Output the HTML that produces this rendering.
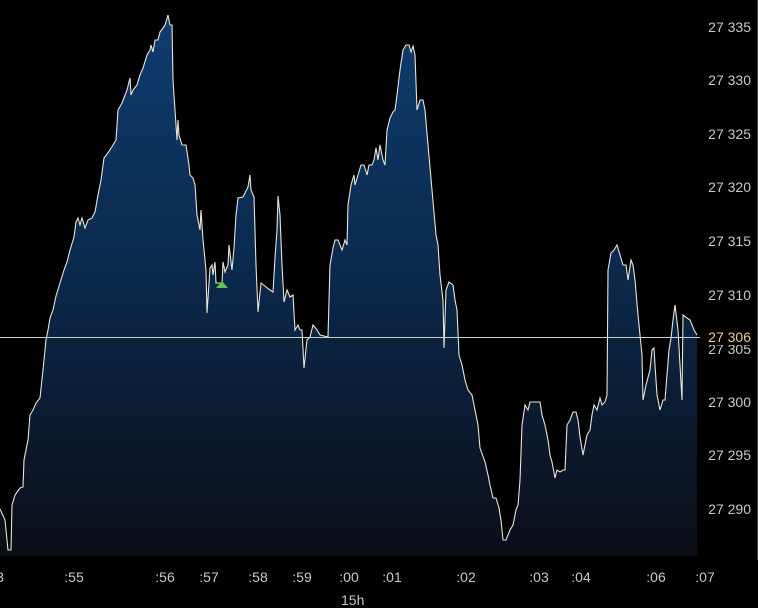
<!DOCTYPE html>
<html><head><meta charset="utf-8"><style>
html,body{margin:0;padding:0;background:#000;width:758px;height:599px;overflow:hidden;font-family:"Liberation Sans","DejaVu Sans",sans-serif}
.lbl{position:absolute;font-size:14px;color:#c8c8c8;white-space:nowrap}
.p{right:7px;transform:translateY(-50%)}
.t{top:569px;transform:translateX(-50%)}
</style></head><body>
<svg width="758" height="599" style="position:absolute;left:0;top:0">
<defs>
<linearGradient id="gr" x1="0" y1="15" x2="0" y2="556" gradientUnits="userSpaceOnUse">
<stop offset="0" stop-color="#0e3c70"/><stop offset="0.45" stop-color="#0b2a4e"/><stop offset="1" stop-color="#0b0e17"/></linearGradient></defs>
<polygon fill="url(#gr)" points="0,556 0,509 5,520 8,550 11,550 12,505 15,495 20,488 23,487 24,460 28,440 30,415 33,410 36,403 40,398 43,370 46,340 48,330 50,318 53,310 56,296 60,283 64,270 67,262 70,250 74,237 76,222 78,218 80,225 82,218 85,228 88,220 92,218 95,212 98,195 101,180 104,158 110,150 116,140 118,110 122,103 127,90 130,78 131,95 133,90 137,85 140,75 143,68 147,55 150,50 151,45 153,52 155,40 158,40 160,32 163,28 165,25 168,15 170,25 172,25 173,80 175,110 177,140 178,120 179,135 182,145 186,145 189,165 190,175 193,178 195,185 197,215 200,230 201,210 203,240 206,270 207,313 210,268 212,265 213,275 215,262 216,283 222,283 223,262 225,272 228,265 229,245 232,270 234,248 236,215 238,198 243,197 248,187 250,175 251,190 254,197 256,265 258,312 261,283 270,290 273,292 275,258 277,230 278,196 280,215 282,265 284,302 287,290 290,297 293,295 295,330 298,325 300,330 302,330 304,368 307,340 310,337 313,325 317,330 320,335 328,337 330,265 333,248 335,240 338,240 342,250 345,240 347,245 348,205 351,185 354,175 355,185 358,175 361,165 364,165 367,175 369,165 372,165 374,160 376,148 378,160 380,145 383,160 385,165 387,130 390,118 393,112 395,110 397,95 400,70 403,50 406,45 409,45 411,52 413,46 415,55 417,110 420,100 423,100 425,110 428,145 432,190 436,235 438,245 440,275 443,300 444,348 446,290 449,282 453,285 455,300 457,310 459,355 462,365 465,380 468,390 472,395 475,410 478,425 480,448 485,462 488,475 490,485 493,498 496,498 499,508 501,520 503,540 506,540 510,530 513,525 516,510 518,505 520,480 522,425 525,405 528,410 530,402 535,402 540,402 542,415 545,425 548,440 550,455 552,462 555,478 557,470 560,472 563,470 565,470 567,425 570,420 573,412 576,412 578,420 580,437 583,455 585,445 587,435 590,430 592,415 594,405 597,410 600,398 602,405 605,402 607,395 608,270 611,253 614,250 617,245 620,255 623,265 626,265 628,280 631,260 633,265 635,280 638,315 640,335 642,355 643,400 646,385 650,370 652,350 654,348 655,365 657,395 660,410 663,400 665,400 667,375 669,350 671,338 673,320 675,305 678,330 680,365 682,400 683,315 687,318 690,320 692,325 694,330 697,335 697,556"/>
<polyline fill="none" stroke="#e8e4d8" stroke-width="1.1" points="0,509 5,520 8,550 11,550 12,505 15,495 20,488 23,487 24,460 28,440 30,415 33,410 36,403 40,398 43,370 46,340 48,330 50,318 53,310 56,296 60,283 64,270 67,262 70,250 74,237 76,222 78,218 80,225 82,218 85,228 88,220 92,218 95,212 98,195 101,180 104,158 110,150 116,140 118,110 122,103 127,90 130,78 131,95 133,90 137,85 140,75 143,68 147,55 150,50 151,45 153,52 155,40 158,40 160,32 163,28 165,25 168,15 170,25 172,25 173,80 175,110 177,140 178,120 179,135 182,145 186,145 189,165 190,175 193,178 195,185 197,215 200,230 201,210 203,240 206,270 207,313 210,268 212,265 213,275 215,262 216,283 222,283 223,262 225,272 228,265 229,245 232,270 234,248 236,215 238,198 243,197 248,187 250,175 251,190 254,197 256,265 258,312 261,283 270,290 273,292 275,258 277,230 278,196 280,215 282,265 284,302 287,290 290,297 293,295 295,330 298,325 300,330 302,330 304,368 307,340 310,337 313,325 317,330 320,335 328,337 330,265 333,248 335,240 338,240 342,250 345,240 347,245 348,205 351,185 354,175 355,185 358,175 361,165 364,165 367,175 369,165 372,165 374,160 376,148 378,160 380,145 383,160 385,165 387,130 390,118 393,112 395,110 397,95 400,70 403,50 406,45 409,45 411,52 413,46 415,55 417,110 420,100 423,100 425,110 428,145 432,190 436,235 438,245 440,275 443,300 444,348 446,290 449,282 453,285 455,300 457,310 459,355 462,365 465,380 468,390 472,395 475,410 478,425 480,448 485,462 488,475 490,485 493,498 496,498 499,508 501,520 503,540 506,540 510,530 513,525 516,510 518,505 520,480 522,425 525,405 528,410 530,402 535,402 540,402 542,415 545,425 548,440 550,455 552,462 555,478 557,470 560,472 563,470 565,470 567,425 570,420 573,412 576,412 578,420 580,437 583,455 585,445 587,435 590,430 592,415 594,405 597,410 600,398 602,405 605,402 607,395 608,270 611,253 614,250 617,245 620,255 623,265 626,265 628,280 631,260 633,265 635,280 638,315 640,335 642,355 643,400 646,385 650,370 652,350 654,348 655,365 657,395 660,410 663,400 665,400 667,375 669,350 671,338 673,320 675,305 678,330 680,365 682,400 683,315 687,318 690,320 692,325 694,330 697,335"/>
<polygon fill="#5cc84a" points="216,288 222,281 228,288"/>
<line x1="0" y1="337.5" x2="700" y2="337.5" stroke="#cfcfcf" stroke-width="1"/>
<line x1="757.5" y1="0" x2="757.5" y2="560" stroke="#444" stroke-width="1"/>
</svg>
<div class="lbl p" style="top:27px">27 335</div>
<div class="lbl p" style="top:80px">27 330</div>
<div class="lbl p" style="top:134px">27 325</div>
<div class="lbl p" style="top:187px">27 320</div>
<div class="lbl p" style="top:241px">27 315</div>
<div class="lbl p" style="top:295px">27 310</div>
<div class="lbl p" style="top:349px">27 305</div>
<div class="lbl p" style="top:402px">27 300</div>
<div class="lbl p" style="top:455px">27 295</div>
<div class="lbl p" style="top:509px">27 290</div>
<div class="lbl p" style="top:337px;color:#f0c89a;background:#000">27 306</div>
<div class="lbl t" style="left:0px">3</div>
<div class="lbl t" style="left:74px">:55</div>
<div class="lbl t" style="left:165px">:56</div>
<div class="lbl t" style="left:209px">:57</div>
<div class="lbl t" style="left:258px">:58</div>
<div class="lbl t" style="left:302px">:59</div>
<div class="lbl t" style="left:349px">:00</div>
<div class="lbl t" style="left:392px">:01</div>
<div class="lbl t" style="left:466px">:02</div>
<div class="lbl t" style="left:539px">:03</div>
<div class="lbl t" style="left:581px">:04</div>
<div class="lbl t" style="left:656px">:06</div>
<div class="lbl t" style="left:705px">:07</div>
<div class="lbl" style="left:341px;top:592px">15h</div>
</body></html>
